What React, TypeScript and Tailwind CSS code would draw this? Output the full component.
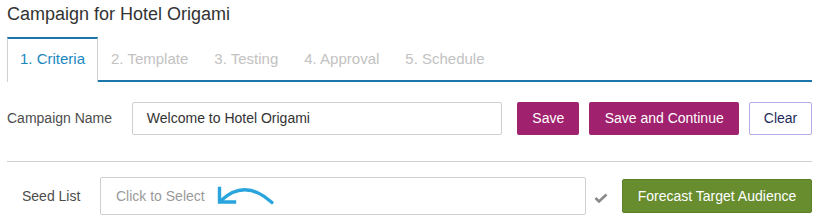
import React from "react";

const tabs = ["1. Criteria", "2. Template", "3. Testing", "4. Approval", "5. Schedule"];

function CurvedArrow() {
  return (
    <svg width="60" height="22" viewBox="0 0 60 22" className="ml-[11px]" fill="none">
      <path d="M5 15.5 Q29 -7 56 17.5" stroke="#29a4dc" strokeWidth="3.2" strokeLinecap="round" />
      <path d="M3.5 3.5 L3.5 17 L18.5 17" stroke="#29a4dc" strokeWidth="3.4" strokeLinecap="square" strokeLinejoin="miter" />
    </svg>
  );
}

function Check() {
  return (
    <svg width="14" height="10" viewBox="0 0 14 10" fill="none">
      <path d="M1.5 5 L5 8.5 L12.5 1.5" stroke="#8a8a8a" strokeWidth="2.6" />
    </svg>
  );
}

export default function App() {
  return (
    <div className="w-[823px] h-[224px] bg-white pl-[7px] pr-[11px] font-['Liberation_Sans',Arial,sans-serif] text-[14px]">
      <div className="h-[37px] pt-[3px] text-[18px] leading-[22px] text-[#333]">Campaign for Hotel Origami</div>

      <div className="flex h-[45px] border-b-2 border-[#1b76a9]">
        {tabs.map((t, i) =>
          i === 0 ? (
            <div
              key={t}
              className="-mb-[2px] flex h-[45px] items-center border-x border-t-2 border-x-[#d0d0d0] border-t-[#1b76a9] bg-white px-3 pb-[2px] text-[15px] text-[#1a87bf]"
            >
              {t}
            </div>
          ) : (
            <div key={t} className="flex items-center border-x border-t-2 border-transparent px-3 text-[15px] text-[#c2c2c2]">
              {t}
            </div>
          )
        )}
      </div>

      <div className="mt-[20px] flex h-[33px] items-center">
        <div className="w-[125px] text-[#4d4d4d]">Campaign Name</div>
        <div className="flex h-[33px] w-[371px] items-center rounded-[2px] border border-[#cfcfcf] px-[14px] text-[#333]">
          Welcome to Hotel Origami
        </div>
        <button className="ml-[15px] h-[33px] w-[62px] rounded-[2px] bg-[#a0216d] text-white">Save</button>
        <button className="ml-[10px] h-[33px] w-[150px] rounded-[2px] bg-[#a0216d] text-white">Save and Continue</button>
        <button className="ml-[10px] h-[33px] w-[63px] rounded-[2px] border border-[#b5abe6] bg-white text-[#1f2b5c]">Clear</button>
      </div>

      <div className="mt-[26px] h-px bg-[#d0d0d0]" />

      <div className="mt-[15px] flex h-[38px] items-center">
        <div className="w-[93px] pl-[15px] text-[#4d4d4d]">Seed List</div>
        <div className="flex h-[38px] w-[486px] items-center rounded-[2px] border border-[#cfcfcf] px-[15px] text-[#9a9a9a]">
          Click to Select
          <CurvedArrow />
        </div>
        <div className="ml-[8px] mt-[3px] flex">
          <Check />
        </div>
        <button className="ml-[14px] h-[34px] w-[190px] rounded-[2px] border border-[#5c7f27] bg-[#678d2f] text-white">
          Forecast Target Audience
        </button>
      </div>
    </div>
  );
}
